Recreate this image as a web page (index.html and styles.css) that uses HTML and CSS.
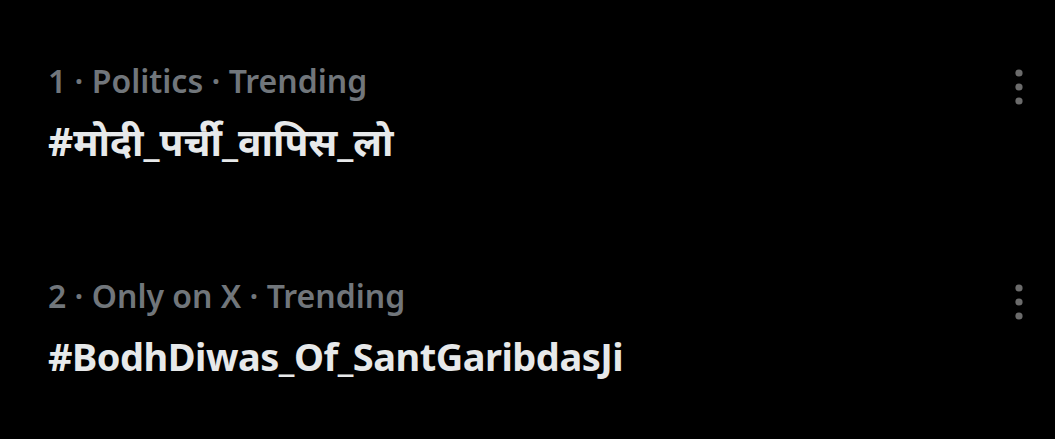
FILE: index.html
```html
<!DOCTYPE html>
<html lang="en">
<head>
<meta charset="utf-8">
<link rel="stylesheet" href="styles.css">
</head>
<body>
<main class="trends">
  <div class="trend">
    <div class="trend-body">
      <div class="meta">1 · Politics · Trending</div>
      <div class="tag tag-hi" lang="hi">#मोदी_पर्ची_वापिस_लो</div>
    </div>
    <button class="more" aria-label="More">
      <svg width="8" height="36" viewBox="0 0 8 36"><circle cx="4" cy="4" r="3.6"/><circle cx="4" cy="18" r="3.6"/><circle cx="4" cy="32" r="3.6"/></svg>
    </button>
  </div>
  <div class="trend">
    <div class="trend-body">
      <div class="meta">2 · Only on X · Trending</div>
      <div class="tag">#BodhDiwas_Of_SantGaribdasJi</div>
    </div>
    <button class="more" aria-label="More">
      <svg width="8" height="36" viewBox="0 0 8 36"><circle cx="4" cy="4" r="3.6"/><circle cx="4" cy="18" r="3.6"/><circle cx="4" cy="32" r="3.6"/></svg>
    </button>
  </div>
</main>
</body>
</html>
```
FILE: styles.css
```css
html, body {
  margin: 0;
  background: #000;
}
body {
  font-family: "Noto Sans", "Open Sans", sans-serif;
  width: 1055px;
  height: 439px;
  overflow: hidden;
}
.trends {
  display: flex;
  flex-direction: column;
  gap: 109px;
  padding: 61px 32px 0 48px;
}
.trend {
  display: flex;
  justify-content: space-between;
  align-items: flex-start;
}
.trend-body {
  display: flex;
  flex-direction: column;
}
.meta {
  color: #71767b;
  font-size: 32px;
  font-weight: 600;
  line-height: 40px;
  letter-spacing: 0;
}
.tag {
  color: #e7e9ea;
  font-size: 38px;
  font-weight: 700;
  line-height: 52px;
  margin-top: 14px;
  letter-spacing: -0.5px;
}
.tag-hi {
  font-size: 39px;
  letter-spacing: 0;
}
.more {
  background: none;
  border: 0;
  padding: 8px 0 0;
  margin: 0;
  fill: #6b6b6b;
  display: flex;
}
```
